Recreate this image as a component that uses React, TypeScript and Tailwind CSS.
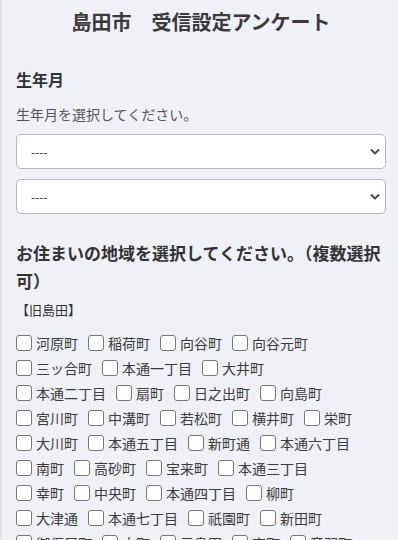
import { useState } from 'react';

const areas = [
    '河原町', '稲荷町', '向谷町', '向谷元町', '三ッ合町', '本通一丁目', '大井町',
    '本通二丁目', '扇町', '日之出町', '向島町', '宮川町', '中溝町', '若松町', '横井町', '栄町',
    '大川町', '本通五丁目', '新町通', '本通六丁目', '南町', '高砂町', '宝来町', '本通三丁目',
    '幸町', '中央町', '本通四丁目', '柳町', '大津通', '本通七丁目', '祇園町', '新田町',
    '御仮屋町', '本町', '元島田', '東町', '音羽町',
];

function Chevron() {
    return (
        <svg width="10" height="7" viewBox="0 0 10 7" className="pointer-events-none absolute right-[6px] top-1/2 -translate-y-1/2">
            <path d="M1.5 1.5 L5 5 L8.5 1.5" fill="none" stroke="#4b4b55" strokeWidth="2" strokeLinecap="round" strokeLinejoin="round" />
        </svg>
    );
}

function Select() {
    return (
        <div className="relative">
            <select className="h-[35px] w-full appearance-none rounded-[5px] border border-[#b5b8c0] bg-white pl-[14px] text-[12px] text-[#333] outline-none">
                <option>----</option>
            </select>
            <Chevron />
        </div>
    );
}

export default function App() {
    const [checked, setChecked] = useState<Record<string, boolean>>({});

    return (
        <div
            className="min-h-[540px] border-l-2 border-[#e3e4e8] bg-[#eff1f6] pl-[14px] pr-[12px] text-[#333]"
            style={{ fontFamily: '"Noto Sans CJK JP", "Noto Sans", sans-serif' }}
        >
            <h1 className="pt-[8px] text-center text-[20px] font-bold leading-[28px] text-[#3a3a3a]">
                島田市　受信設定アンケート
            </h1>

            {/* 生年月 */}
            <h2 className="mt-[31px] text-[16px] font-bold leading-[24px] text-[#333]">生年月</h2>
            <p className="mt-[13px] text-[14px] leading-[20px] text-[#555]">生年月を選択してください。</p>
            <div className="mt-[10px] flex flex-col gap-[10px]">
                <Select />
                <Select />
            </div>

            {/* 地域 */}
            <h2 className="mt-[25px] text-[17px] font-bold leading-[28px] text-[#333]">
                お住まいの地域を選択してください。（複数選択可）
            </h2>
            <p className="mt-[5px] text-[13px] leading-[20px] text-[#333]">【旧島田】</p>
            <div className="mt-[10px] flex w-[342px] flex-wrap gap-x-[10px]">
                {areas.map((a) => (
                    <label key={a} className="flex h-[25px] items-center">
                        <input
                            type="checkbox"
                            checked={!!checked[a]}
                            onChange={() => setChecked({ ...checked, [a]: !checked[a] })}
                            className="m-0 h-[16px] w-[16px] appearance-none rounded-[3px] border border-[#767676] bg-white checked:bg-[#0075ff]"
                        />
                        <span className="ml-[4px] text-[14px] leading-[20px] text-[#3c3c3c]">{a}</span>
                    </label>
                ))}
            </div>
        </div>
    );
}
